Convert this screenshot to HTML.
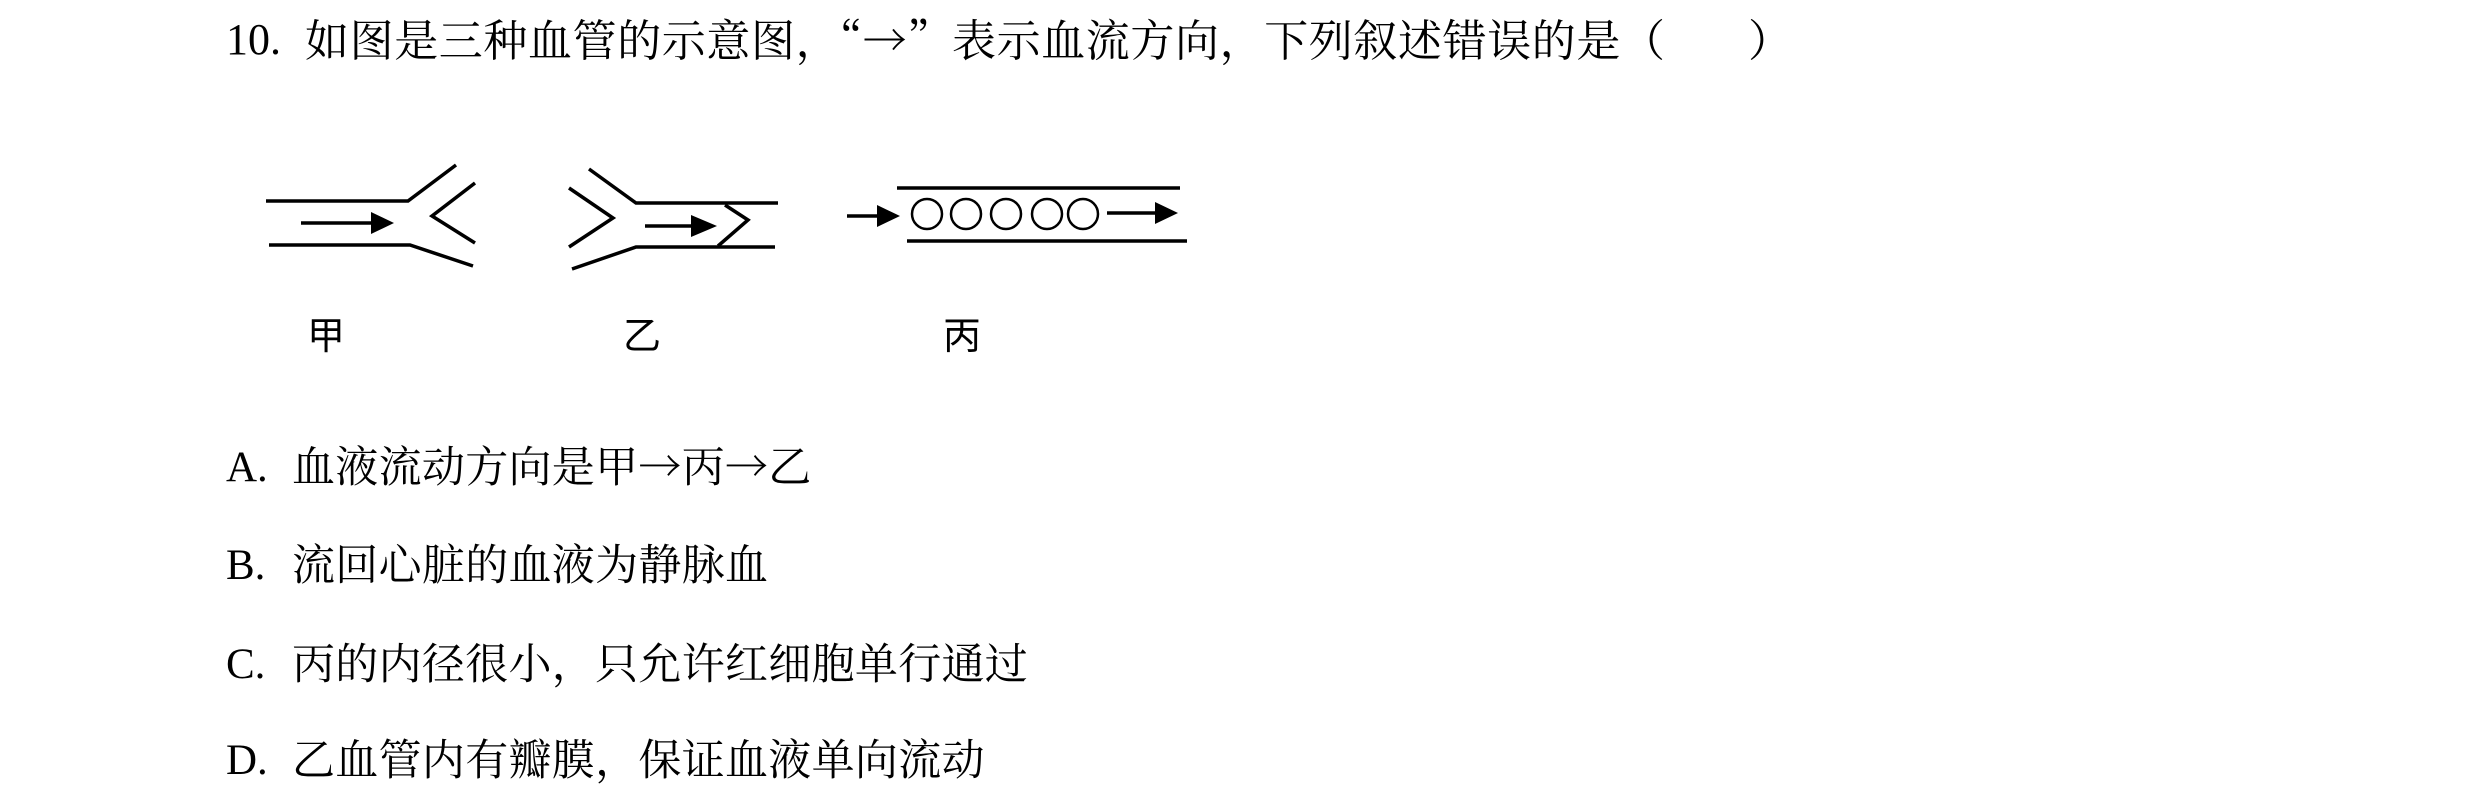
<!DOCTYPE html>
<html><head><meta charset="utf-8"><style>
html,body{margin:0;padding:0;background:#fff;}
body{width:2480px;height:796px;position:relative;overflow:hidden;font-family:"Liberation Serif","Noto Serif CJK SC",serif;color:#000;}
.t{position:absolute;left:226px;font-size:43px;line-height:50px;white-space:pre;}
.t .l{position:relative;top:3px;}
.t .c{position:absolute;left:66px;top:0;font-family:"Noto Serif CJK SC",serif;letter-spacing:0.3px;}
.lab{position:absolute;font-family:"Noto Sans CJK SC",sans-serif;font-size:38px;line-height:40px;}
</style></head><body>
<div class="t" style="top:12px;font-size:44px"><span class="l">10.</span><span class="c" style="left:79px;letter-spacing:0.6px">如图是三种血管的示意图，“→”表示血流方向，下列叙述错误的是（</span><span class="c" style="left:1522px">）</span></div>
<svg style="position:absolute;left:0;top:0" width="1300" height="420" viewBox="0 0 1300 420">
<g stroke="#000" stroke-width="3.5" fill="none">
<polyline points="266,201 408,201 456,165"/>
<polyline points="269,245 410,245 473,266"/>
<polyline points="475,183 432,216 475,243"/>
<line x1="301" y1="223" x2="375" y2="223"/>
<polyline points="589,169 636,203 778,203"/>
<polyline points="569,188 613,218 569,247"/>
<polyline points="572,269 636,247 775,247"/>
<polyline points="725,205 748,220 718,246"/>
<line x1="645" y1="226" x2="695" y2="226"/>
<line x1="897" y1="188" x2="1180" y2="188"/>
<line x1="907" y1="241" x2="1187" y2="241"/>
<line x1="847" y1="216" x2="880" y2="216"/>
<line x1="1107" y1="213" x2="1158" y2="213"/>
<g stroke-width="2.5">
<circle cx="927" cy="214" r="15"/>
<circle cx="966" cy="214" r="15"/>
<circle cx="1006" cy="214" r="15"/>
<circle cx="1047" cy="214" r="15"/>
<circle cx="1083" cy="214" r="15"/>
</g>
</g>
<g fill="#000">
<polygon points="371,212 394,223 371,234"/>
<polygon points="691,215 717,226 691,237"/>
<polygon points="877,205 900,216 877,227"/>
<polygon points="1155,202 1178,213 1155,224"/>
</g>
</svg>
<div class="lab" style="left:307px;top:313px">甲</div>
<div class="lab" style="left:623px;top:313px">乙</div>
<div class="lab" style="left:943px;top:313px">丙</div>
<div class="t" style="top:440px"><span class="l">A.</span><span class="c">血液流动方向是甲→丙→乙</span></div>
<div class="t" style="top:538px"><span class="l">B.</span><span class="c">流回心脏的血液为静脉血</span></div>
<div class="t" style="top:637px"><span class="l">C.</span><span class="c">丙的内径很小，只允许红细胞单行通过</span></div>
<div class="t" style="top:733px"><span class="l">D.</span><span class="c">乙血管内有瓣膜，保证血液单向流动</span></div>
</body></html>
